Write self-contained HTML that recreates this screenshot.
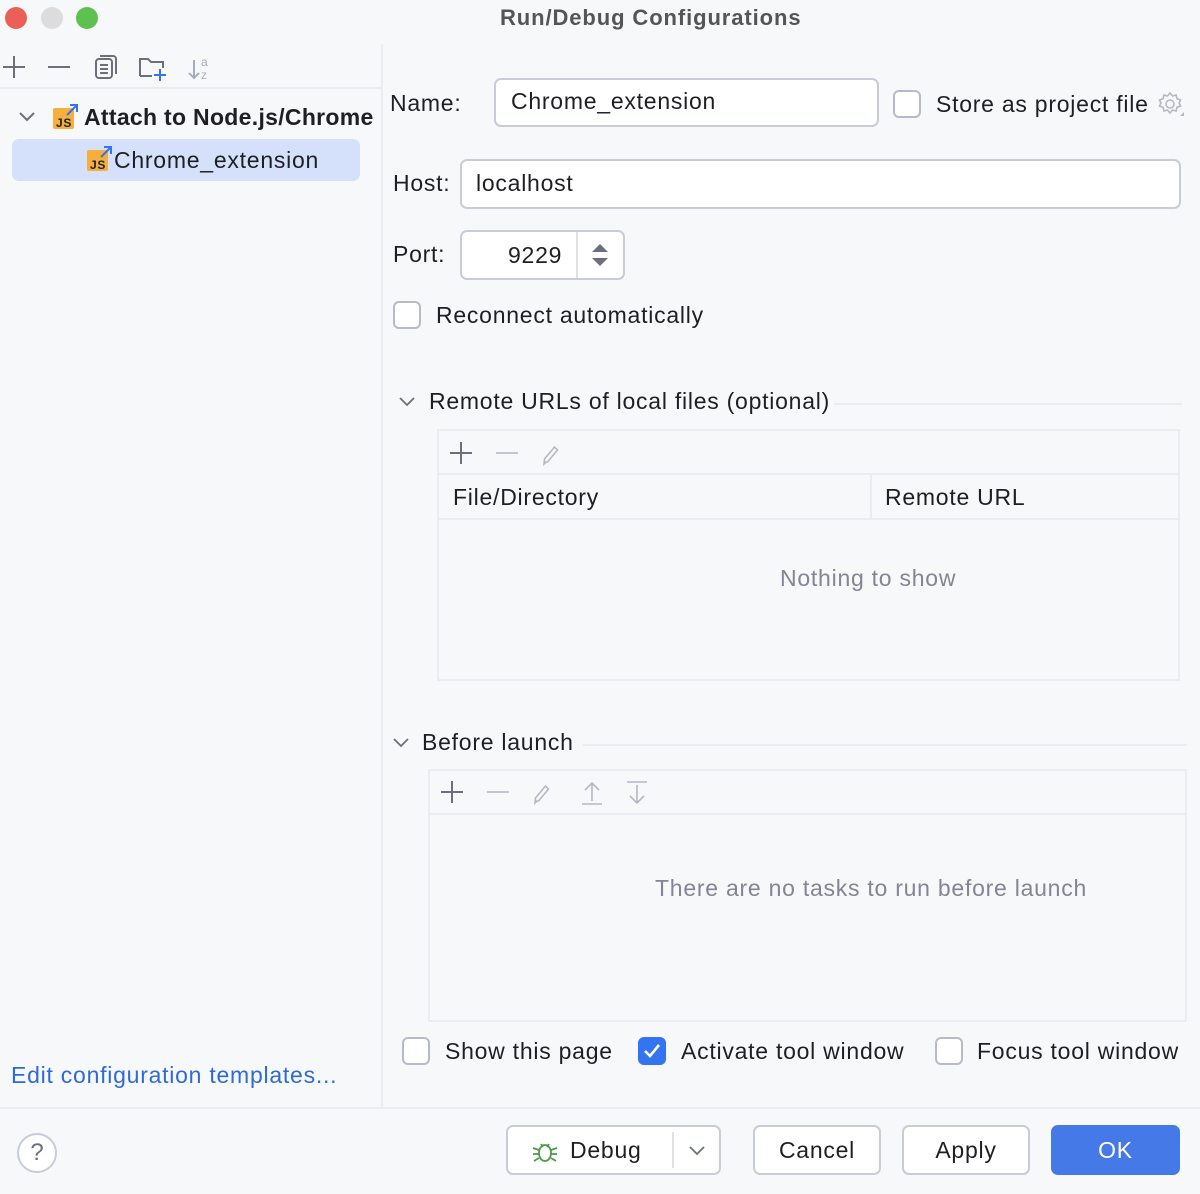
<!DOCTYPE html>
<html><head><meta charset="utf-8"><style>
*{box-sizing:border-box;margin:0;padding:0}
body{width:1200px;height:1194px;background:#f7f8fa;font-family:"Liberation Sans",sans-serif;font-size:23px;letter-spacing:0.75px;color:#1e1f22;position:relative;overflow:hidden}
.a{position:absolute;white-space:nowrap}
.box{position:absolute;background:#fff;border:2px solid #c9ccd6;border-radius:7px}
.cb{position:absolute;width:28px;height:28px;border:2px solid #b8bbc7;border-radius:6px;background:#fff}
.btn{position:absolute;height:50px;border:2px solid #c9ccd6;border-radius:7px;background:#fff;text-align:center;line-height:46px}
.line{position:absolute;background:#ebecf0}
</style></head><body>
<div class="a" style="left:5px;top:7px;width:22px;height:22px;border-radius:50%;background:#ec5f57"></div>
<div class="a" style="left:41px;top:7px;width:22px;height:22px;border-radius:50%;background:#dcdcdc"></div>
<div class="a" style="left:76px;top:7px;width:22px;height:22px;border-radius:50%;background:#5ec14f"></div>
<div class="a" style="left:500px;top:5px;font-weight:bold;font-size:22px;letter-spacing:0.9px;color:#555">Run/Debug Configurations</div>

<div class="line" style="left:381px;top:44px;width:2px;height:1064px"></div>
<div class="line" style="left:0;top:87px;width:381px;height:2px"></div>
<svg class="a" style="left:0;top:52px" width="220" height="30" fill="none" stroke="#6c707e" stroke-width="2">
<path d="M14 4v22M3 15h22"/><path d="M48 15h22"/>
<rect x="96" y="7" width="16" height="19" rx="3"/><path d="M100 4h13a3 3 0 0 1 3 3v15"/><path d="M100 13h8M100 17h8M100 21h8"/>
<path d="M140 24V7h8l3 3h12v6" /><path d="M140 24h12"/><path d="M160 17v12M154 23h12" stroke="#3574f0"/>
<path d="M194 8v18M189 21l5 5 5-5" stroke="#a8adbd"/>
<text x="201" y="14" font-size="12" fill="#a8adbd" stroke="none" font-family="Liberation Sans">a</text>
<text x="201" y="27" font-size="12" fill="#a8adbd" stroke="none" font-family="Liberation Sans">z</text>
</svg>
<svg class="a" style="left:18px;top:110px" width="18" height="14" fill="none" stroke="#6c707e" stroke-width="2"><path d="M2 3l7 7 7-7"/></svg>
<svg class="a" style="left:52px;top:103px" width="28" height="28"><rect x="1" y="5" width="21" height="21" rx="2" fill="#f4af3d"/><text x="4" y="24" font-size="12" font-weight="bold" font-family="Liberation Sans" fill="#1e1f22">JS</text><path d="M15 12l10-10M18 2h7v7" stroke="#3574f0" stroke-width="2" fill="none"/></svg>
<div class="a" style="left:84px;top:104px;font-weight:bold;letter-spacing:0.3px">Attach to Node.js/Chrome</div>
<div class="a" style="left:12px;top:139px;width:348px;height:42px;background:#d5e1fb;border-radius:7px"></div>
<svg class="a" style="left:86px;top:145px" width="28" height="28"><rect x="1" y="5" width="21" height="21" rx="2" fill="#f4af3d"/><text x="4" y="24" font-size="12" font-weight="bold" font-family="Liberation Sans" fill="#1e1f22">JS</text><path d="M15 12l10-10M18 2h7v7" stroke="#3574f0" stroke-width="2" fill="none"/></svg>
<div class="a" style="left:114px;top:147px">Chrome_extension</div>
<div class="a" style="left:11px;top:1062px;color:#2e6ad6">Edit configuration templates...</div>

<div class="a" style="left:390px;top:90px">Name:</div>
<div class="box" style="left:494px;top:78px;width:385px;height:49px"></div>
<div class="a" style="left:511px;top:88px">Chrome_extension</div>
<div class="cb" style="left:893px;top:90px"></div>
<div class="a" style="left:936px;top:91px">Store as project file</div>
<svg class="a" style="left:1156px;top:90px" width="30" height="30" fill="none" stroke="#b4b8c4" stroke-width="1.6"><circle cx="14" cy="14" r="4"/><path d="M14 3l2.5 3 3.6-1 .8 3.7 3.6 1.2-1.4 3.1 1.4 3.1-3.6 1.2-.8 3.7-3.6-1-2.5 3-2.5-3-3.6 1-.8-3.7-3.6-1.2 1.4-3.1-1.4-3.1 3.6-1.2.8-3.7 3.6 1z"/><path d="M24 26l4-4v4z" fill="#b4b8c4" stroke="none"/></svg>

<div class="a" style="left:393px;top:170px">Host:</div>
<div class="box" style="left:460px;top:159px;width:721px;height:50px"></div>
<div class="a" style="left:476px;top:170px">localhost</div>

<div class="a" style="left:393px;top:241px">Port:</div>
<div class="box" style="left:460px;top:230px;width:165px;height:50px"></div>
<div class="a" style="left:576px;top:232px;width:2px;height:46px;background:#dfe1e5"></div>
<div class="a" style="left:508px;top:242px">9229</div>
<svg class="a" style="left:588px;top:242px" width="24" height="26"><path d="M4 10l8-8 8 8z M4 16l8 8 8-8z" fill="#6c707e"/></svg>

<div class="cb" style="left:393px;top:301px"></div>
<div class="a" style="left:436px;top:302px">Reconnect automatically</div>

<svg class="a" style="left:398px;top:395px" width="18" height="14" fill="none" stroke="#6c707e" stroke-width="1.8"><path d="M2 3l7 7 7-7"/></svg>
<div class="a" style="left:429px;top:388px">Remote URLs of local files (optional)</div>
<div class="line" style="left:834px;top:403px;width:348px;height:2px"></div>
<div class="a" style="left:437px;top:429px;width:743px;height:252px;border:2px solid #ebecf0"></div>
<div class="line" style="left:439px;top:473px;width:739px;height:2px"></div>
<div class="line" style="left:439px;top:518px;width:739px;height:2px"></div>
<div class="line" style="left:870px;top:475px;width:2px;height:43px"></div>
<svg class="a" style="left:448px;top:440px" width="130" height="26" fill="none" stroke-width="2"><path d="M13 2v22M2 13h22" stroke="#6c707e"/><path d="M48 13h22" stroke="#c4c7d0"/><path d="M98 22l-2 2 .5-5 10-12 3 3-10 12z" stroke="#b4b8c4" stroke-width="1.6"/></svg>
<div class="a" style="left:453px;top:484px">File/Directory</div>
<div class="a" style="left:885px;top:484px">Remote URL</div>
<div class="a" style="left:780px;top:565px;color:#818594">Nothing to show</div>

<svg class="a" style="left:392px;top:736px" width="18" height="14" fill="none" stroke="#6c707e" stroke-width="1.8"><path d="M2 3l7 7 7-7"/></svg>
<div class="a" style="left:422px;top:729px">Before launch</div>
<div class="line" style="left:583px;top:744px;width:604px;height:2px"></div>
<div class="a" style="left:428px;top:769px;width:759px;height:253px;border:2px solid #ebecf0"></div>
<div class="line" style="left:430px;top:813px;width:755px;height:2px"></div>
<svg class="a" style="left:439px;top:779px" width="220" height="28" fill="none" stroke-width="2"><path d="M13 2v22M2 13h22" stroke="#6c707e"/><path d="M48 13h22" stroke="#c4c7d0"/><path d="M98 22l-2 2 .5-5 10-12 3 3-10 12z" stroke="#b4b8c4" stroke-width="1.6"/><path d="M153 4v18M146 11l7-7 7 7M143 25h20" stroke="#b4b8c4" stroke-width="1.6"/><path d="M198 6v18M191 17l7 7 7-7M188 3h20" stroke="#b4b8c4" stroke-width="1.6"/></svg>
<div class="a" style="left:655px;top:875px;color:#818594">There are no tasks to run before launch</div>

<div class="cb" style="left:402px;top:1037px"></div>
<div class="a" style="left:445px;top:1038px">Show this page</div>
<div class="cb" style="left:638px;top:1037px;background:#3574f0;border-color:#3574f0"></div>
<svg class="a" style="left:642px;top:1041px" width="20" height="20" fill="none" stroke="#fff" stroke-width="2.6"><path d="M3 10l5 5 9-11"/></svg>
<div class="a" style="left:681px;top:1038px">Activate tool window</div>
<div class="cb" style="left:935px;top:1037px"></div>
<div class="a" style="left:977px;top:1038px">Focus tool window</div>

<div class="line" style="left:0;top:1107px;width:1200px;height:2px"></div>
<div class="a" style="left:17px;top:1133px;width:40px;height:40px;border:2px solid #c9ccd6;border-radius:50%;background:#fff;text-align:center;line-height:36px;color:#6c707e;font-size:24px;letter-spacing:0">?</div>
<div class="btn" style="left:506px;top:1125px;width:215px"></div>
<svg class="a" style="left:530px;top:1137px" width="30" height="28" fill="none" stroke="#4a9a4a" stroke-width="1.8"><ellipse cx="15" cy="16" rx="6" ry="8"/><path d="M11 7l2 3M19 7l-2 3M3 11l6 2M3 17h6M4 24l5-3M27 11l-6 2M27 17h-6M26 24l-5-3"/></svg>
<div class="a" style="left:570px;top:1137px">Debug</div>
<div class="a" style="left:672px;top:1132px;width:2px;height:36px;background:#dfe1e5"></div>
<svg class="a" style="left:688px;top:1145px" width="18" height="12" fill="none" stroke="#6c707e" stroke-width="1.8"><path d="M2 2l7 7 7-7"/></svg>
<div class="btn" style="left:753px;top:1125px;width:128px">Cancel</div>
<div class="btn" style="left:902px;top:1125px;width:128px">Apply</div>
<div class="btn" style="left:1051px;top:1125px;width:129px;background:#4679e8;border-color:#4679e8;color:#fff">OK</div>
</body></html>
